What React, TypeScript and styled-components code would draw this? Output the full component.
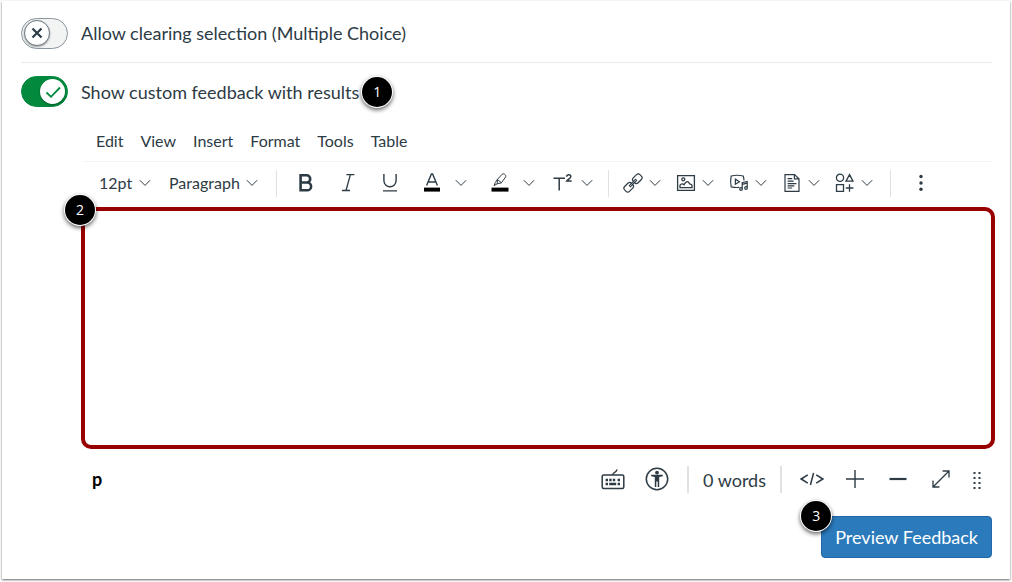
import React from 'react';
import styled, { createGlobalStyle } from 'styled-components';

const ink = '#2d3b45';

const GlobalStyle = createGlobalStyle`
  *, *::before, *::after { box-sizing: border-box; }
  body {
    margin: 0;
    background: #fff;
    color: ${ink};
    font-family: Lato, "Liberation Sans", sans-serif;
  }
  button, select, textarea {
    font: inherit;
    color: inherit;
  }
`;

const Card = styled.main`
  margin: 1px 2px 3px;
  padding: 3px 18px 21px 19px;
  background: #fff;
  box-shadow: 0 1px 2px rgba(0, 0, 0, 0.6);
`;

const SettingRow = styled.div<{ $divided?: boolean }>`
  display: flex;
  align-items: center;
  gap: 3px;
  height: ${(p) => (p.$divided ? 59 : 57)}px;
  border-bottom: ${(p) => (p.$divided ? '1px solid #e8eaec' : '0')};
`;

const ToggleLabel = styled.label`
  display: flex;
  align-items: center;
  gap: 13px;
  font-size: 18px;
  line-height: 24px;
  cursor: pointer;
`;

const ToggleTrack = styled.span<{ $on: boolean }>`
  position: relative;
  display: flex;
  flex: none;
  align-items: center;
  justify-content: ${(p) => (p.$on ? 'flex-end' : 'flex-start')};
  width: 47px;
  height: 31px;
  padding: 0 2px;
  border: 1px solid ${(p) => (p.$on ? '#03893d' : '#8b969e')};
  border-radius: 16px;
  background: ${(p) => (p.$on ? '#03893d' : '#f2f4f4')};
`;

const ToggleInput = styled.input`
  position: absolute;
  inset: 0;
  width: 100%;
  height: 100%;
  margin: 0;
  opacity: 0;
  cursor: pointer;
`;

const Knob = styled.span<{ $on: boolean }>`
  display: grid;
  place-items: center;
  width: ${(p) => (p.$on ? 25 : 26)}px;
  height: ${(p) => (p.$on ? 25 : 26)}px;
  border: ${(p) => (p.$on ? '0' : `1px solid #6b7780`)};
  border-radius: 50%;
  background: #fff;
  color: ${(p) => (p.$on ? '#03893d' : ink)};
  box-shadow: 0 1px 2px rgba(0, 0, 0, 0.35);
`;

const Badge = styled.span`
  display: grid;
  flex: none;
  place-items: center;
  width: 30px;
  height: 30px;
  border-radius: 50%;
  background: #000;
  color: #fff;
  font-family: "Open Sans", "Liberation Sans", sans-serif;
  font-size: 14px;
  line-height: 20px;
  box-shadow: 0 0 0 1px #fff, 0 2px 4px 1px rgba(0, 0, 0, 0.6);
`;

const CornerBadge = styled(Badge)<{ $top: number; $left: number }>`
  position: absolute;
  top: ${(p) => p.$top}px;
  left: ${(p) => p.$left}px;
`;

const Editor = styled.section`
  margin-left: 62px;
`;

const MenuBar = styled.nav`
  display: flex;
  align-items: center;
  gap: 17px;
  height: 42px;
  padding-left: 13px;
  border-bottom: 1px solid #f2f3f4;
`;

const MenuButton = styled.button`
  padding: 0;
  border: 0;
  background: none;
  font-size: 16px;
  line-height: 20px;
`;

const Toolbar = styled.div`
  display: flex;
  align-items: center;
  height: 45px;
  padding: 0 0 3px 16px;
`;

const SelectField = styled.span<{ $width: number }>`
  display: grid;
  align-items: center;
  width: ${(p) => p.$width}px;
  margin-right: 18px;

  & > * { grid-area: 1 / 1; }
  & > svg { justify-self: end; pointer-events: none; }
`;

const Select = styled.select`
  width: 100%;
  padding: 0;
  border: 0;
  background: none;
  appearance: none;
  font-size: 16px;
  line-height: 20px;
`;

const Divider = styled.span<{ $wide?: boolean }>`
  flex: none;
  width: ${(p) => (p.$wide ? 2 : 1)}px;
  height: 27px;
  background: #dfe2e4;
`;

const ToolGroup = styled.div<{ $gap: number; $start: number; $end: number }>`
  display: flex;
  align-items: center;
  gap: ${(p) => p.$gap}px;
  padding: 0 ${(p) => p.$end}px 0 ${(p) => p.$start}px;
`;

const IconButton = styled.button<{ $width: number }>`
  display: grid;
  flex: none;
  place-items: center;
  width: ${(p) => p.$width}px;
  height: 32px;
  padding: 0;
  border: 0;
  background: none;
`;

const Split = styled.span`
  display: flex;
`;

const Content = styled.div`
  position: relative;
  margin: 0 -3px 0 -2px;
`;

const TextArea = styled.textarea`
  display: block;
  width: 100%;
  height: 242px;
  padding: 12px;
  border: 4px solid #980000;
  border-radius: 10px;
  outline: 0;
  background: #fff;
  font-size: 16px;
  resize: none;
`;

const StatusBar = styled.div`
  display: flex;
  align-items: center;
  justify-content: space-between;
  height: 60px;
  padding-left: 9px;
  font-size: 18px;
  line-height: 24px;
`;

const Path = styled.span`
  color: #000;
  font-weight: 700;
`;

const StatusTools = styled.div`
  display: flex;
  align-items: center;
`;

const WordCount = styled.span`
  padding: 2px 14px 0;
`;

const Actions = styled.div`
  display: flex;
  justify-content: flex-end;
  padding-top: 7px;
`;

const ActionAnchor = styled.div`
  position: relative;
`;

const PrimaryButton = styled.button`
  height: 42px;
  padding: 0 13px;
  border: 1px solid #2268a6;
  border-radius: 4px;
  background: #2b7abc;
  color: #fff;
  font-size: 18px;
  line-height: 24px;
`;

type IconProps = { w?: number; h?: number; sw?: number; children: React.ReactNode };

const Icon = ({ w = 20, h = 20, sw = 1.2, children }: IconProps) => (
  <svg width={w} height={h} viewBox={`0 0 ${w} ${h}`} fill="none" stroke="currentColor" strokeWidth={sw} aria-hidden="true">
    {children}
  </svg>
);

const Chevron = () => (
  <Icon w={12} h={8} sw={1}><path d="M.8 1.2 6 6.4l5.2-5.2" /></Icon>
);

const icons = {
  bold: <Icon sw={2.6}><path d="M4.6 2.3h6a3.6 3.6 0 0 1 0 7.2h-6zM4.6 9.5h6.6a3.9 3.9 0 0 1 0 7.8H4.6z" /></Icon>,
  italic: <Icon sw={1.3}><path d="M8.4 1.6h8M4 17.5h8M12.4 1.6 8 17.5" /></Icon>,
  underline: <Icon sw={1.4}><path d="M3.9 1v6.6a6.1 6.1 0 0 0 12.2 0V1M3 17.9h14" /></Icon>,
  color: (
    <Icon sw={1.4}>
      <path d="M4.6 12.6 9.4 1h1.2l4.8 11.6M6.2 9h7.6" />
      <path d="M2 14.6h16v4H2z" fill="#000" stroke="none" />
    </Icon>
  ),
  highlight: (
    <Icon sw={1}>
      <path d="M7.400 6.400 12.200 1.200c1.600-1.300 4.600 1.100 3.300 3L11.400 9.800 7.200 10.800zM7.400 6.400l4 3.400M7.200 10.800 4 12.600l1.400-3.200 2-3" />
      <path d="M1.500 14.600h17v4h-17z" fill="#000" stroke="none" />
    </Icon>
  ),
  superscript: (
    <Icon sw={1.5}>
      <path d="M.5 5.200h11.500M6.200 5.200v12.300" />
      <path d="M13.600 3.800c.2-2.800 4.200-2.600 4.200-.4 0 1.800-2.600 2.700-4 4.600h4.800" />
    </Icon>
  ),
  link: (
    <Icon sw={1.2}>
      <g transform="rotate(-45 10 10)">
        <rect x="-.8" y="6.600" width="9.400" height="6.800" rx="2.400" />
        <rect x="11.400" y="6.600" width="9.400" height="6.800" rx="2.400" />
        <path d="M5.600 9.200h8.800v1.600H5.600z" strokeWidth="1" />
      </g>
    </Icon>
  ),
  image: (
    <Icon sw={1.3}>
      <path d="M1.600 2.600h16.800v14.800H1.600z" />
      <circle cx="7.300" cy="6.300" r="1.500" />
      <path d="M4 14.600v-2.400c1.300-1.600 2.700-1.900 4-.4 1.300-3 4-4.600 5.400-1.200.4 1 1.700.2 2.600 1.800v2.200z" />
    </Icon>
  ),
  media: (
    <Icon sw={1.200}>
      <path d="M10.200 14.400c-2.800.2-5.600 0-8-.6-.8-3.500-.8-7.200 0-10.800 4-1 8-1 12 0 .5 1.400.7 2.800.8 4.400M6.400 6.200v5l4-2.500z" />
      <path d="M13.200 15.800V9.600l5-1.200v6.200M13.200 11.400l5-1.200" />
      <circle cx="12" cy="16" r="1.300" />
      <circle cx="17" cy="15" r="1.300" />
    </Icon>
  ),
  document: (
    <Icon sw={1.200}>
      <path d="M3 1.600h9.500l4.500 4.200v12.600H3zM12.400 1.600v4.300H17M5.600 5.600h4.600M5.600 8.200h6M5.600 10.600h8.800M5.600 12.800h6.800M5.600 15h4.600" />
    </Icon>
  ),
  shapes: (
    <Icon sw={1.300}>
      <circle cx="5" cy="4.800" r="3.600" />
      <path d="M14.500 1.600 18 8.200h-7zM1.500 11.600h7v6.800h-7zM14.500 11.200v7.600M10.800 15h7.600" />
    </Icon>
  ),
  more: (
    <Icon>
      <g fill="currentColor" stroke="none">
        <circle cx="10" cy="3.500" r="1.700" /><circle cx="10" cy="10" r="1.700" /><circle cx="10" cy="16.300" r="1.700" />
      </g>
    </Icon>
  ),
  keyboard: (
    <Icon w={24} h={22} sw={1.500}>
      <rect x="1.200" y="7" width="21.600" height="13.600" rx="1.500" />
      <path d="M11.800 7c0-3.400 3.600-1.800 4.200-5.500" />
      <path d="M4.600 12h2.400M8.200 12h2.400M11.800 12h2.400M16.600 12H19" strokeWidth="2.600" />
      <path d="M4.600 16H7M8.200 16h7M16.600 16H19" strokeWidth="2.600" />
    </Icon>
  ),
  accessibility: (
    <Icon w={24} h={24} sw={1.500}>
      <circle cx="12" cy="12" r="10.700" />
      <g fill="currentColor" stroke="none">
        <circle cx="12" cy="5.600" r="1.900" />
        <path d="M6.200 7.800h11.600v1.400l-3.600.8v10h-1.500v-5.600h-1.400V20H9.800V10l-3.600-.8z" />
      </g>
    </Icon>
  ),
  code: <Icon w={24} h={16} sw={1.500}><path d="M7.800 3.800 1.200 8l6.600 4.200M16.200 3.800 22.800 8l-6.600 4.200M13.600 2l-3.200 12" /></Icon>,
  plus: <Icon sw={1.400}><path d="M10 1v18M1 10h18" /></Icon>,
  minus: <Icon sw={2.200}><path d="M1.500 10h17" /></Icon>,
  expand: <Icon sw={1.300}><path d="M2 18 18 2M11.600 2H18v6.400M2 11.600V18h6.400" /></Icon>,
  grip: (
    <Icon>
      <g fill="currentColor" stroke="none">
        {[3, 8, 13, 18].map((y) => (
          <React.Fragment key={y}>
            <rect x="6.500" y={y} width="2" height="2" /><rect x="11.500" y={y} width="2" height="2" />
          </React.Fragment>
        ))}
      </g>
    </Icon>
  ),
};

const Toggle = ({ label, on, onChange }: { label: string; on: boolean; onChange: (v: boolean) => void }) => (
  <ToggleLabel>
    <ToggleTrack $on={on}>
      <ToggleInput type="checkbox" role="switch" checked={on} onChange={(e) => onChange(e.target.checked)} />
      <Knob $on={on}>
        {on ? (
          <Icon w={18} h={18} sw={1.800}><path d="M2.500 9.500 7 13.800l9-9.300" /></Icon>
        ) : (
          <Icon w={14} h={14} sw={2.200}><path d="m2.500 2.500 9 9M11.500 2.500l-9 9" /></Icon>
        )}
      </Knob>
    </ToggleTrack>
    {label}
  </ToggleLabel>
);

const SplitTool = ({ name, icon, width }: { name: string; icon: React.ReactNode; width: number }) => (
  <Split>
    <IconButton type="button" $width={width} aria-label={name}>{icon}</IconButton>
    <IconButton type="button" $width={16} aria-label={`${name} options`}><Chevron /></IconButton>
  </Split>
);

export default function App() {
  const [clearing, setClearing] = React.useState(false);
  const [feedback, setFeedback] = React.useState(true);

  return (
    <>
      <GlobalStyle />
      <Card>
        <SettingRow $divided>
          <Toggle label="Allow clearing selection (Multiple Choice)" on={clearing} onChange={setClearing} />
        </SettingRow>
        <SettingRow>
          <Toggle label="Show custom feedback with results" on={feedback} onChange={setFeedback} />
          <Badge>1</Badge>
        </SettingRow>

        <Editor>
          <MenuBar>
            {['Edit', 'View', 'Insert', 'Format', 'Tools', 'Table'].map((m) => (
              <MenuButton type="button" key={m}>{m}</MenuButton>
            ))}
          </MenuBar>

          <Toolbar>
            <SelectField $width={52}>
              <Select aria-label="Font size" defaultValue="12pt"><option>12pt</option></Select>
              <Chevron />
            </SelectField>
            <SelectField $width={89}>
              <Select aria-label="Block style" defaultValue="Paragraph"><option>Paragraph</option></Select>
              <Chevron />
            </SelectField>
            <Divider />
            <ToolGroup $gap={0} $start={8} $end={0}>
              <IconButton type="button" $width={42} aria-label="Bold">{icons.bold}</IconButton>
              <IconButton type="button" $width={42} aria-label="Italic">{icons.italic}</IconButton>
              <IconButton type="button" $width={42} aria-label="Underline">{icons.underline}</IconButton>
            </ToolGroup>
            <ToolGroup $gap={10} $start={0} $end={13}>
              <SplitTool name="Text color" icon={icons.color} width={42} />
              <SplitTool name="Highlight color" icon={icons.highlight} width={42} />
              <SplitTool name="Superscript" icon={icons.superscript} width={32} />
            </ToolGroup>
            <Divider />
            <ToolGroup $gap={9} $start={10} $end={15}>
              <SplitTool name="Links" icon={icons.link} width={28} />
              <SplitTool name="Images" icon={icons.image} width={28} />
              <SplitTool name="Media" icon={icons.media} width={28} />
              <SplitTool name="Documents" icon={icons.document} width={28} />
              <SplitTool name="Apps" icon={icons.shapes} width={28} />
            </ToolGroup>
            <Divider />
            <ToolGroup $gap={0} $start={14} $end={0}>
              <IconButton type="button" $width={32} aria-label="More tools">{icons.more}</IconButton>
            </ToolGroup>
          </Toolbar>

          <Content>
            <TextArea aria-label="Custom feedback" />
            <CornerBadge $top={-12} $left={-16}>2</CornerBadge>
          </Content>

          <StatusBar>
            <Path>p</Path>
            <StatusTools>
              <IconButton type="button" $width={44} aria-label="Keyboard shortcuts">{icons.keyboard}</IconButton>
              <IconButton type="button" $width={44} aria-label="Accessibility checker">{icons.accessibility}</IconButton>
              <ToolGroup $gap={0} $start={8} $end={8}>
                <Divider $wide />
                <WordCount>0 words</WordCount>
                <Divider $wide />
              </ToolGroup>
              <IconButton type="button" $width={43} aria-label="HTML editor">{icons.code}</IconButton>
              <IconButton type="button" $width={43} aria-label="Increase height">{icons.plus}</IconButton>
              <IconButton type="button" $width={43} aria-label="Decrease height">{icons.minus}</IconButton>
              <IconButton type="button" $width={43} aria-label="Full screen">{icons.expand}</IconButton>
              <IconButton type="button" $width={30} aria-label="Resize editor">{icons.grip}</IconButton>
            </StatusTools>
          </StatusBar>

          <Actions>
            <ActionAnchor>
              <PrimaryButton type="button">Preview Feedback</PrimaryButton>
              <CornerBadge $top={-15} $left={-20}>3</CornerBadge>
            </ActionAnchor>
          </Actions>
        </Editor>
      </Card>
    </>
  );
}
